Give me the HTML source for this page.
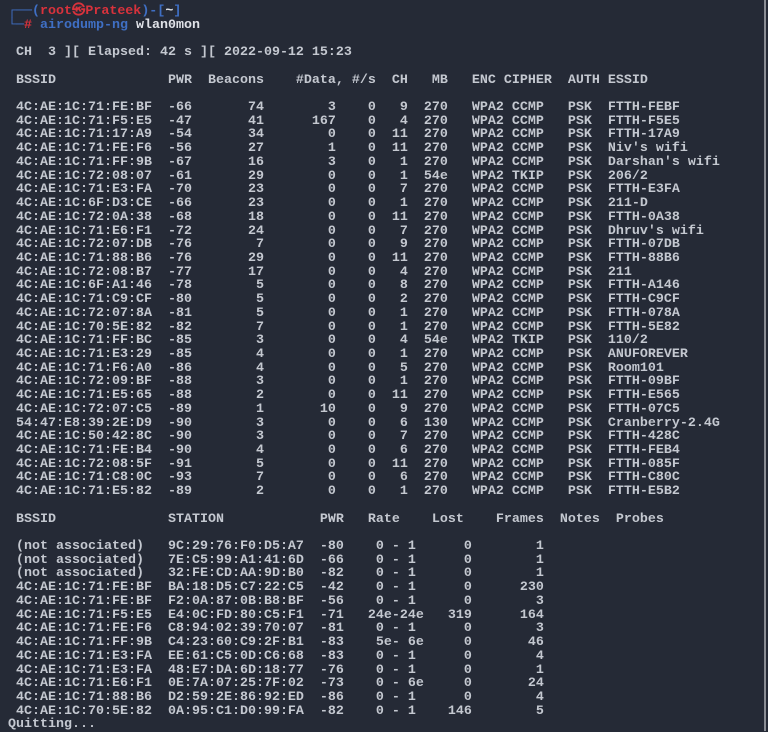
<!DOCTYPE html>
<html><head><meta charset="utf-8"><style>
html,body{margin:0;padding:0;background:#252a36;}
body{width:768px;height:731px;overflow:hidden;position:relative;}
pre{position:absolute;left:8px;top:5px;margin:0;font-family:"Liberation Mono",monospace;font-size:13.333px;line-height:13.72px;color:#c4c8d0;font-weight:bold;}
.b{color:#3f6fc4}.r{color:#d8323c}.w{color:#e0e2e8}
.edge{position:absolute;right:2px;top:0;width:2px;height:731px;background:#8a8d94;}
</style></head><body>
<pre><span class="b">┌──(</span><span class="r">root㉿Prateek</span><span class="b">)-[</span><span class="w">~</span><span class="b">]</span>
<span class="b">└─</span><span class="r">#</span> <span class="b">airodump-ng</span> <span class="w">wlan0mon</span>

 CH  3 ][ Elapsed: 42 s ][ 2022-09-12 15:23

 BSSID              PWR  Beacons    #Data, #/s  CH   MB   ENC CIPHER  AUTH ESSID

 4C:AE:1C:71:FE:BF  -66       74        3    0   9  270   WPA2 CCMP   PSK  FTTH-FEBF
 4C:AE:1C:71:F5:E5  -47       41      167    0   4  270   WPA2 CCMP   PSK  FTTH-F5E5
 4C:AE:1C:71:17:A9  -54       34        0    0  11  270   WPA2 CCMP   PSK  FTTH-17A9
 4C:AE:1C:71:FE:F6  -56       27        1    0  11  270   WPA2 CCMP   PSK  Niv's wifi
 4C:AE:1C:71:FF:9B  -67       16        3    0   1  270   WPA2 CCMP   PSK  Darshan's wifi
 4C:AE:1C:72:08:07  -61       29        0    0   1  54e   WPA2 TKIP   PSK  206/2
 4C:AE:1C:71:E3:FA  -70       23        0    0   7  270   WPA2 CCMP   PSK  FTTH-E3FA
 4C:AE:1C:6F:D3:CE  -66       23        0    0   1  270   WPA2 CCMP   PSK  211-D
 4C:AE:1C:72:0A:38  -68       18        0    0  11  270   WPA2 CCMP   PSK  FTTH-0A38
 4C:AE:1C:71:E6:F1  -72       24        0    0   7  270   WPA2 CCMP   PSK  Dhruv's wifi
 4C:AE:1C:72:07:DB  -76        7        0    0   9  270   WPA2 CCMP   PSK  FTTH-07DB
 4C:AE:1C:71:88:B6  -76       29        0    0  11  270   WPA2 CCMP   PSK  FTTH-88B6
 4C:AE:1C:72:08:B7  -77       17        0    0   4  270   WPA2 CCMP   PSK  211
 4C:AE:1C:6F:A1:46  -78        5        0    0   8  270   WPA2 CCMP   PSK  FTTH-A146
 4C:AE:1C:71:C9:CF  -80        5        0    0   2  270   WPA2 CCMP   PSK  FTTH-C9CF
 4C:AE:1C:72:07:8A  -81        5        0    0   1  270   WPA2 CCMP   PSK  FTTH-078A
 4C:AE:1C:70:5E:82  -82        7        0    0   1  270   WPA2 CCMP   PSK  FTTH-5E82
 4C:AE:1C:71:FF:BC  -85        3        0    0   4  54e   WPA2 TKIP   PSK  110/2
 4C:AE:1C:71:E3:29  -85        4        0    0   1  270   WPA2 CCMP   PSK  ANUFOREVER
 4C:AE:1C:71:F6:A0  -86        4        0    0   5  270   WPA2 CCMP   PSK  Room101
 4C:AE:1C:72:09:BF  -88        3        0    0   1  270   WPA2 CCMP   PSK  FTTH-09BF
 4C:AE:1C:71:E5:65  -88        2        0    0  11  270   WPA2 CCMP   PSK  FTTH-E565
 4C:AE:1C:72:07:C5  -89        1       10    0   9  270   WPA2 CCMP   PSK  FTTH-07C5
 54:47:E8:39:2E:D9  -90        3        0    0   6  130   WPA2 CCMP   PSK  Cranberry-2.4G
 4C:AE:1C:50:42:8C  -90        3        0    0   7  270   WPA2 CCMP   PSK  FTTH-428C
 4C:AE:1C:71:FE:B4  -90        4        0    0   6  270   WPA2 CCMP   PSK  FTTH-FEB4
 4C:AE:1C:72:08:5F  -91        5        0    0  11  270   WPA2 CCMP   PSK  FTTH-085F
 4C:AE:1C:71:C8:0C  -93        7        0    0   6  270   WPA2 CCMP   PSK  FTTH-C80C
 4C:AE:1C:71:E5:82  -89        2        0    0   1  270   WPA2 CCMP   PSK  FTTH-E5B2

 BSSID              STATION            PWR   Rate    Lost    Frames  Notes  Probes

 (not associated)   9C:29:76:F0:D5:A7  -80    0 - 1      0        1
 (not associated)   7E:C5:99:A1:41:6D  -66    0 - 1      0        1
 (not associated)   32:FE:CD:AA:9D:B0  -82    0 - 1      0        1
 4C:AE:1C:71:FE:BF  BA:18:D5:C7:22:C5  -42    0 - 1      0      230
 4C:AE:1C:71:FE:BF  F2:0A:87:0B:B8:BF  -56    0 - 1      0        3
 4C:AE:1C:71:F5:E5  E4:0C:FD:80:C5:F1  -71   24e-24e   319      164
 4C:AE:1C:71:FE:F6  C8:94:02:39:70:07  -81    0 - 1      0        3
 4C:AE:1C:71:FF:9B  C4:23:60:C9:2F:B1  -83    5e- 6e     0       46
 4C:AE:1C:71:E3:FA  EE:61:C5:0D:C6:68  -83    0 - 1      0        4
 4C:AE:1C:71:E3:FA  48:E7:DA:6D:18:77  -76    0 - 1      0        1
 4C:AE:1C:71:E6:F1  0E:7A:07:25:7F:02  -73    0 - 6e     0       24
 4C:AE:1C:71:88:B6  D2:59:2E:86:92:ED  -86    0 - 1      0        4
 4C:AE:1C:70:5E:82  0A:95:C1:D0:99:FA  -82    0 - 1    146        5
Quitting...</pre>
<div class="edge"></div>
</body></html>
